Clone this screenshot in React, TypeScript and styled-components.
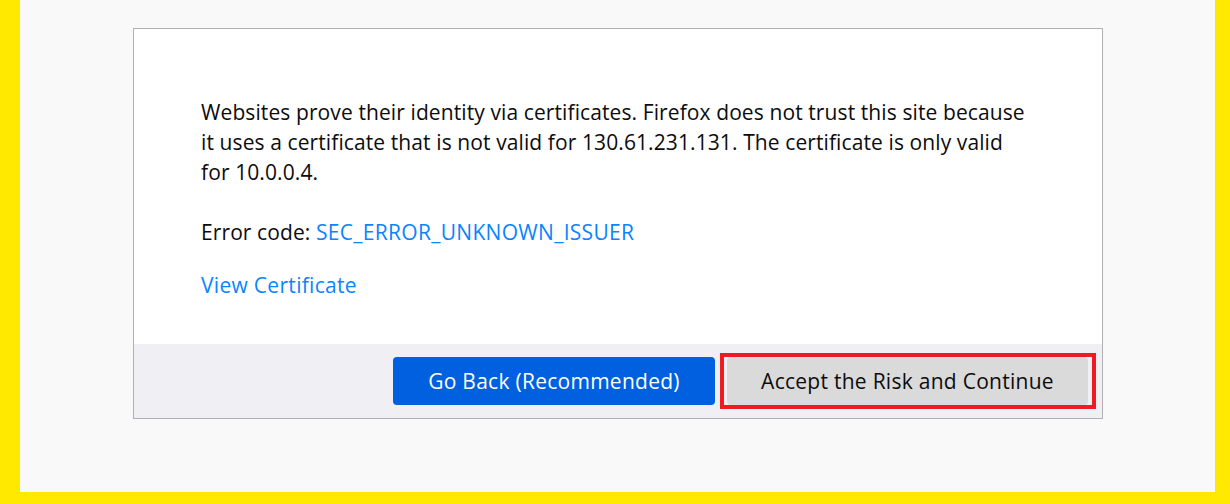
import React from "react";
import styled, { createGlobalStyle } from "styled-components";

const GlobalStyle = createGlobalStyle`
  html, body { margin: 0; padding: 0; }
  body { background: #ffe900; font-family: "Open Sans", "Noto Sans", sans-serif; }
  * { box-sizing: border-box; }
`;

const Frame = styled.div`
  width: 1230px;
  height: 504px;
  background: #ffe900;
  padding: 0 15px 12px 20px;
`;

const Page = styled.div`
  height: 100%;
  background: #f9f9fa;
  padding: 28px 0 0 113px;
`;

const Dialog = styled.div`
  width: 970px;
  background: #ffffff;
  border: 1px solid #b1b1b3;
  display: flex;
  flex-direction: column;
`;

const Body = styled.div`
  height: 315px;
  padding: 68px 67px 0;
  color: #0c0c0d;
  font-size: 21px;
  letter-spacing: 0.1px;
  line-height: 30px;
`;

const Para = styled.p<{ $gap?: number }>`
  margin: 0 0 ${(p) => p.$gap ?? 0}px;
  white-space: nowrap;
`;

const Link = styled.a`
  color: #0a84ff;
  text-decoration: none;
  letter-spacing: 0.3px;
`;

const Footer = styled.div`
  height: 74px;
  background: #f0f0f4;
  display: flex;
  justify-content: flex-end;
  align-items: center;
  padding-right: 6px;
  gap: 5px;
`;

const Button = styled.button<{ $primary?: boolean }>`
  height: 48px;
  border: none;
  border-radius: 4px;
  font-family: "Open Sans", "Noto Sans", sans-serif;
  font-size: 21px;
  letter-spacing: 0.27px;
  padding: 0;
  background: ${(p) => (p.$primary ? "#0060df" : "#dadadb")};
  color: ${(p) => (p.$primary ? "#ffffff" : "#0c0c0d")};
`;

const GoBack = styled(Button)`
  width: 322px;
`;

const Accept = styled(Button)`
  width: 361px;
  margin: 0 4px 0 3px;
`;

const Highlight = styled.div`
  border: 4px solid #ed1c24;
  height: 56px;
  display: flex;
  align-items: center;
`;

export default function App() {
  return (
    <Frame>
      <GlobalStyle />
      <Page>
        <Dialog>
          <Body>
            <Para $gap={30}>
              Websites prove their identity via certificates. Firefox does not trust this site because
              <br />
              it uses a certificate that is not valid for 130.61.231.131. The certificate is only valid
              <br />
              for 10.0.0.4.
            </Para>
            <Para $gap={23}>
              Error code: <Link href="#">SEC_ERROR_UNKNOWN_ISSUER</Link>
            </Para>
            <Para>
              <Link href="#">View Certificate</Link>
            </Para>
          </Body>
          <Footer>
            <GoBack $primary>Go Back (Recommended)</GoBack>
            <Highlight>
              <Accept>Accept the Risk and Continue</Accept>
            </Highlight>
          </Footer>
        </Dialog>
      </Page>
    </Frame>
  );
}
